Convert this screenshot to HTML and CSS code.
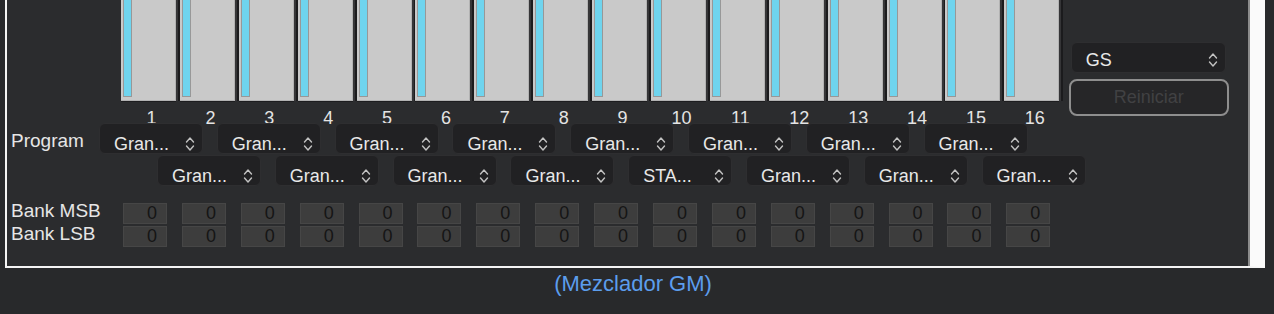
FILE: index.html
```html
<!DOCTYPE html>
<html lang="es">
<head>
    <meta charset="UTF-8">
    <meta name="viewport" content="width=device-width, initial-scale=1.0">
    <title>Mezclador GM</title>
    <link rel="stylesheet" href="styles.css">
</head>
<body>
    <div class="panel">
        <div class="top">
            <div class="channels">
                <div class="faders">
                    <div class="fader"><span class="level"></span></div>
                    <div class="fader"><span class="level"></span></div>
                    <div class="fader"><span class="level"></span></div>
                    <div class="fader"><span class="level"></span></div>
                    <div class="fader"><span class="level"></span></div>
                    <div class="fader"><span class="level"></span></div>
                    <div class="fader"><span class="level"></span></div>
                    <div class="fader"><span class="level"></span></div>
                    <div class="fader"><span class="level"></span></div>
                    <div class="fader"><span class="level"></span></div>
                    <div class="fader"><span class="level"></span></div>
                    <div class="fader"><span class="level"></span></div>
                    <div class="fader"><span class="level"></span></div>
                    <div class="fader"><span class="level"></span></div>
                    <div class="fader"><span class="level"></span></div>
                    <div class="fader"><span class="level"></span></div>
                </div>
                <div class="numbers">
                    <span>1</span><span>2</span><span>3</span><span>4</span>
                    <span>5</span><span>6</span><span>7</span><span>8</span>
                    <span>9</span><span>10</span><span>11</span><span>12</span>
                    <span>13</span><span>14</span><span>15</span><span>16</span>
                </div>
            </div>
            <div class="side">
                <div class="select mode">
                    <span>GS</span>
                    <svg class="chevron" viewBox="0 0 12 18"><path d="M2.5 7 L6 3 L9.5 7 M2.5 11 L6 15 L9.5 11"/></svg>
                </div>
                <button class="reset" disabled>Reiniciar</button>
            </div>
        </div>

        <div class="program">
            <div class="prog-row">
                <span class="label prog-label">Program</span>
                <div class="select"><span>Gran...</span><svg class="chevron" viewBox="0 0 12 18"><path d="M2.5 7 L6 3 L9.5 7 M2.5 11 L6 15 L9.5 11"/></svg></div>
                <div class="select"><span>Gran...</span><svg class="chevron" viewBox="0 0 12 18"><path d="M2.5 7 L6 3 L9.5 7 M2.5 11 L6 15 L9.5 11"/></svg></div>
                <div class="select"><span>Gran...</span><svg class="chevron" viewBox="0 0 12 18"><path d="M2.5 7 L6 3 L9.5 7 M2.5 11 L6 15 L9.5 11"/></svg></div>
                <div class="select"><span>Gran...</span><svg class="chevron" viewBox="0 0 12 18"><path d="M2.5 7 L6 3 L9.5 7 M2.5 11 L6 15 L9.5 11"/></svg></div>
                <div class="select"><span>Gran...</span><svg class="chevron" viewBox="0 0 12 18"><path d="M2.5 7 L6 3 L9.5 7 M2.5 11 L6 15 L9.5 11"/></svg></div>
                <div class="select"><span>Gran...</span><svg class="chevron" viewBox="0 0 12 18"><path d="M2.5 7 L6 3 L9.5 7 M2.5 11 L6 15 L9.5 11"/></svg></div>
                <div class="select"><span>Gran...</span><svg class="chevron" viewBox="0 0 12 18"><path d="M2.5 7 L6 3 L9.5 7 M2.5 11 L6 15 L9.5 11"/></svg></div>
                <div class="select"><span>Gran...</span><svg class="chevron" viewBox="0 0 12 18"><path d="M2.5 7 L6 3 L9.5 7 M2.5 11 L6 15 L9.5 11"/></svg></div>
            </div>
            <div class="prog-row shifted">
                <div class="select"><span>Gran...</span><svg class="chevron" viewBox="0 0 12 18"><path d="M2.5 7 L6 3 L9.5 7 M2.5 11 L6 15 L9.5 11"/></svg></div>
                <div class="select"><span>Gran...</span><svg class="chevron" viewBox="0 0 12 18"><path d="M2.5 7 L6 3 L9.5 7 M2.5 11 L6 15 L9.5 11"/></svg></div>
                <div class="select"><span>Gran...</span><svg class="chevron" viewBox="0 0 12 18"><path d="M2.5 7 L6 3 L9.5 7 M2.5 11 L6 15 L9.5 11"/></svg></div>
                <div class="select"><span>Gran...</span><svg class="chevron" viewBox="0 0 12 18"><path d="M2.5 7 L6 3 L9.5 7 M2.5 11 L6 15 L9.5 11"/></svg></div>
                <div class="select"><span>STA...</span><svg class="chevron" viewBox="0 0 12 18"><path d="M2.5 7 L6 3 L9.5 7 M2.5 11 L6 15 L9.5 11"/></svg></div>
                <div class="select"><span>Gran...</span><svg class="chevron" viewBox="0 0 12 18"><path d="M2.5 7 L6 3 L9.5 7 M2.5 11 L6 15 L9.5 11"/></svg></div>
                <div class="select"><span>Gran...</span><svg class="chevron" viewBox="0 0 12 18"><path d="M2.5 7 L6 3 L9.5 7 M2.5 11 L6 15 L9.5 11"/></svg></div>
                <div class="select"><span>Gran...</span><svg class="chevron" viewBox="0 0 12 18"><path d="M2.5 7 L6 3 L9.5 7 M2.5 11 L6 15 L9.5 11"/></svg></div>
            </div>
        </div>

        <div class="banks">
            <div class="bank-row">
                <span class="label bank-label">Bank MSB</span>
                <span class="field">0</span><span class="field">0</span><span class="field">0</span><span class="field">0</span>
                <span class="field">0</span><span class="field">0</span><span class="field">0</span><span class="field">0</span>
                <span class="field">0</span><span class="field">0</span><span class="field">0</span><span class="field">0</span>
                <span class="field">0</span><span class="field">0</span><span class="field">0</span><span class="field">0</span>
            </div>
            <div class="bank-row">
                <span class="label bank-label">Bank LSB</span>
                <span class="field">0</span><span class="field">0</span><span class="field">0</span><span class="field">0</span>
                <span class="field">0</span><span class="field">0</span><span class="field">0</span><span class="field">0</span>
                <span class="field">0</span><span class="field">0</span><span class="field">0</span><span class="field">0</span>
                <span class="field">0</span><span class="field">0</span><span class="field">0</span><span class="field">0</span>
            </div>
        </div>
    </div>

    <p class="caption">(Mezclador GM)</p>
</body>
</html>
```

FILE: styles.css
```css
body {
    margin: 0;
    padding: 0;
    background: #28292b;
    font-family: "Liberation Sans", Arial, sans-serif;
    color: #e4e4e4;
    overflow: hidden;
}

.panel {
    margin-left: 5px;
    width: 1260px;
    height: 268px;
    box-sizing: border-box;
    padding-left: 4px;
    background: #2b2c2e;
    border-left: 2px solid #f4f4f4;
    border-bottom: 2px solid #f4f4f4;
    border-right: 15px solid #fafafa;
    box-shadow: inset -2px 0 0 #8c8c8c;
}

.top {
    display: flex;
    height: 123px;
}

.channels {
    margin-left: 110px;
}

.faders {
    display: flex;
    gap: 3.9px;
}

.fader {
    width: 55px;
    height: 101px;
    box-sizing: border-box;
    padding: 0 0 4px 2px;
    display: flex;
    background: #c9c9c9;
    box-shadow: inset -1px -1px 0 #b2b2b2, 2px 0 0 #353537, 4px 0 0 #1b1b1d, 0 1px 0 #1d1d1f;
}

.level {
    width: 9px;
    box-sizing: border-box;
    background: #6fd4ee;
    border: 1px solid #989898;
    border-top: none;
}

.numbers {
    display: flex;
    gap: 3.9px;
    height: 22px;
    padding-top: 9px;
    box-sizing: border-box;
    font-size: 18px;
    line-height: 16px;
}

.numbers span {
    width: 55px;
    padding-left: 6px;
    box-sizing: border-box;
    text-align: center;
}

.side {
    margin-left: 9.5px;
    padding-top: 42px;
    width: 160px;
}

.select {
    width: 104px;
    height: 31px;
    box-sizing: border-box;
    display: flex;
    align-items: center;
    justify-content: space-between;
    padding: 11px 6px 0 14px;
    background: #212123;
    border: 1px solid #2e2e30;
    border-radius: 6px;
    font-size: 18px;
    line-height: 20px;
    color: #e8e8e8;
}

.select.mode {
    width: 155px;
    margin-left: 2px;
    padding-top: 4px;
}

.chevron {
    width: 12px;
    height: 18px;
    fill: none;
    stroke: #c2c2c2;
    stroke-width: 1.4;
    stroke-linecap: round;
    stroke-linejoin: round;
}

.reset {
    display: block;
    margin-top: 6px;
    width: 160px;
    height: 37px;
    background: #262628;
    border: 2px solid #8e8e8e;
    border-radius: 8px;
    color: #414143;
    font-family: inherit;
    font-size: 18px;
    padding: 0;
}

.prog-row {
    display: flex;
    align-items: center;
    gap: 13.8px;
    height: 31px;
}

.prog-row.shifted {
    margin-top: 1px;
    padding-left: 146px;
}

.label {
    font-size: 19px;
    color: #e6e6e6;
    flex-shrink: 0;
}

.prog-label {
    width: 88px;
    margin-right: -13.8px;
    padding-top: 5px;
}

.banks {
    margin-top: 17px;
}

.bank-row {
    display: flex;
    align-items: flex-start;
    gap: 14.9px;
    height: 21px;
    margin-bottom: 2px;
}

.bank-label {
    width: 112px;
    margin-right: -14.9px;
    line-height: 15px;
}

.field {
    width: 44px;
    box-sizing: border-box;
    background: #3d3d3d;
    border: 1px solid #464646;
    color: #151515;
    text-align: right;
    padding-right: 9px;
    font-size: 18px;
    line-height: 19px;
}

.caption {
    width: 1266px;
    margin: 4px 0 0;
    text-align: center;
    font-size: 22px;
    line-height: 24px;
    color: #5c9ded;
}
```
